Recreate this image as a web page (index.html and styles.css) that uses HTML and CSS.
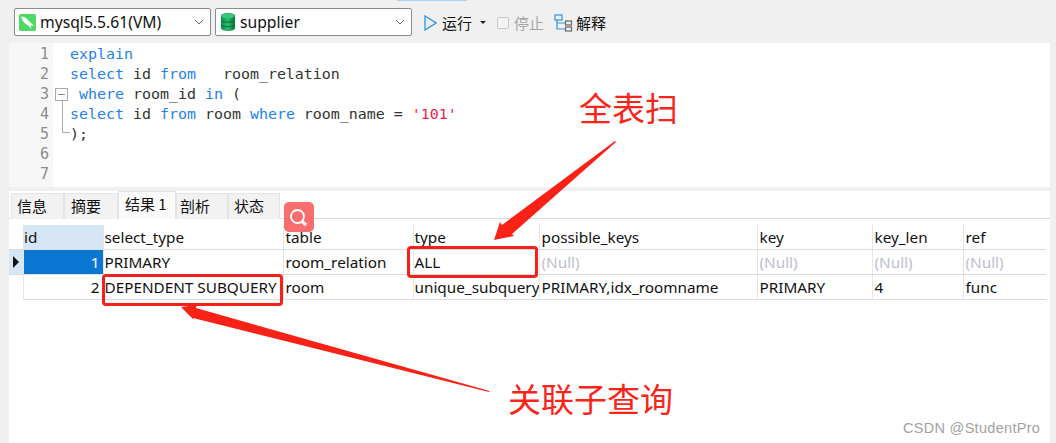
FILE: index.html
```html
<!DOCTYPE html>
<html lang="zh">
<head>
<meta charset="utf-8">
<title>Navicat explain</title>
<link rel="stylesheet" href="styles.css">
</head>
<body>
<div class="app">
  <div class="topline"><span class="topline-blue"></span></div>
  <div class="toolbar">
    <div class="combo">
      <svg class="combo-icon" viewBox="0 0 17 17" width="17" height="17"><rect x="0" y="0" width="17" height="17" rx="2" fill="#4cd964"/><path d="M2 2.500c3 0 5.500 1.500 7.500 4 1.500 2 3.500 3 5.500 5-1.500 0-2.500 .2-3.500 0l1 3c-2-1-3-2.500-4-3.500C5.500 9.500 3.500 7 2 2.500z" fill="#fff"/></svg>
      <span class="combo-text">mysql5.5.61(VM)</span>
      <svg class="chev" viewBox="0 0 10 6" width="10" height="6"><path d="M1 1l4 4 4-4" fill="none" stroke="#666" stroke-width="1"/></svg>
    </div>
    <div class="combo">
      <svg class="combo-icon db" viewBox="0 0 14 18" width="14" height="18"><defs><linearGradient id="dbg" x1="0" x2="1" y1="0" y2="0"><stop offset="0" stop-color="#0b8f4c"/><stop offset=".5" stop-color="#2dbb6c"/><stop offset="1" stop-color="#08703a"/></linearGradient></defs><path d="M0 3c0-4 14-4 14 0v12c0 4-14 4-14 0z" fill="url(#dbg)"/><ellipse cx="7" cy="3" rx="6.500" ry="2.300" fill="#35c878"/><path d="M0 7.500c2 2.200 12 2.200 14 0M0 12c2 2.200 12 2.200 14 0" fill="none" stroke="#06703a" stroke-width="1"/></svg>
      <span class="combo-text">supplier</span>
      <svg class="chev" viewBox="0 0 10 6" width="10" height="6"><path d="M1 1l4 4 4-4" fill="none" stroke="#666" stroke-width="1"/></svg>
    </div>
    <div class="tool tool-run">
      <svg viewBox="0 0 13 16" width="13" height="16"><path d="M1 1l11 7-11 7z" fill="none" stroke="#2a96ea" stroke-width="1.300"/></svg>
      <span>运行</span>
      <i class="caret"></i>
    </div>
    <div class="tool tool-stop">
      <span class="check"></span>
      <span>停止</span>
    </div>
    <div class="tool tool-explain">
      <svg viewBox="0 0 19 18" width="19" height="18"><rect x="1" y="1" width="7" height="5" fill="none" stroke="#2a96ea" stroke-width="1.200"/><rect x="11.500" y="7" width="6" height="4" fill="none" stroke="#666" stroke-width="1.200"/><rect x="11.500" y="13" width="6" height="4" fill="none" stroke="#666" stroke-width="1.200"/><path d="M3 6v9h8M3 9h8" fill="none" stroke="#2a96ea" stroke-width="1.200"/></svg>
      <span>解释</span>
    </div>
  </div>

  <div class="editor">
    <div class="gutter">
      <div>1</div><div>2</div><div>3</div><div>4</div><div>5</div><div>6</div><div>7</div>
    </div>
    <svg class="fold" viewBox="0 0 17 100" width="17" height="100"><rect x="2.500" y="44.500" width="12" height="12" fill="#fff" stroke="#aaa"/><path d="M5 50.500h7" stroke="#888"/><path d="M9.500 56.500v32h7.500" fill="none" stroke="#aaa"/></svg>
    <div class="code">
      <div class="line"><span class="kw">explain</span></div>
      <div class="line"><span class="kw">select</span> id <span class="kw">from</span>   room_relation</div>
      <div class="line"> <span class="kw">where</span> room_id <span class="kw">in</span> (</div>
      <div class="line"><span class="kw">select</span> id <span class="kw">from</span> room <span class="kw">where</span> room_name = <span class="str">'101'</span></div>
      <div class="line">);</div>
    </div>
  </div>

  <div class="results">
    <div class="tabs">
      <div class="tab tab-a">信息</div>
      <div class="tab tab-b">摘要</div>
      <div class="tab tab-active">结果 1</div>
      <div class="tab tab-c">剖析</div>
      <div class="tab tab-d">状态</div>
    </div>
    <table class="grid">
      <colgroup>
        <col class="c0"><col class="c1"><col class="c2"><col class="c3"><col class="c4"><col class="c5"><col class="c6"><col class="c7"><col class="c8">
      </colgroup>
      <thead>
        <tr><th class="mark-head"></th><th class="id-head">id</th><th class="tight">select_type</th><th>table</th><th class="tight">type</th><th>possible_keys</th><th>key</th><th>key_len</th><th>ref</th></tr>
      </thead>
      <tbody>
        <tr><td class="mark"><i class="tri"></i></td><td class="num sel">1</td><td class="tight">PRIMARY</td><td>room_relation</td><td class="tight">ALL</td><td class="null">(Null)</td><td class="null">(Null)</td><td class="null">(Null)</td><td class="null">(Null)</td></tr>
        <tr><td class="mark-empty"></td><td class="num">2</td><td class="tight">DEPENDENT SUBQUERY</td><td>room</td><td class="tight">unique_subquery</td><td>PRIMARY,idx_roomname</td><td>PRIMARY</td><td>4</td><td>func</td></tr>
      </tbody>
    </table>
  </div>

  <div class="search-btn">
    <svg viewBox="0 0 22 22" width="22" height="22"><circle cx="9.500" cy="10.500" r="6.500" fill="none" stroke="#fff" stroke-width="1.800"/><path d="M14 15.500l4 3.500" stroke="#fff" stroke-width="3"/></svg>
  </div>

  <svg class="arrows" viewBox="0 0 1056 443" width="1056" height="443">
    <polygon points="615,141 616,142 512,234 514,236 494,240 500,222 502,225" fill="#fa2216"/>
    <polygon points="489.500,391 489,392 193,318 194,320 181,307 197,305 196,308" fill="#fa2216"/>
  </svg>
  <div class="redbox box-all"></div>
  <div class="redbox box-dep"></div>
  <div class="note note-full">全表扫</div>
  <div class="note note-sub">关联子查询</div>
  <div class="watermark">CSDN @StudentPro</div>
</div>
</body>
</html>
```
FILE: styles.css
```css
* { box-sizing: border-box; }
html, body { margin: 0; padding: 0; }
body { background: #f0f0f0; overflow: hidden; font-family: "Noto Sans", "Noto Sans CJK SC", sans-serif; color: #111; }
.app { position: relative; width: 1056px; height: 443px; display: flex; flex-direction: column; overflow: hidden; }

.topline { height: 1px; padding-left: 397px; }
.topline-blue { display: block; width: 70px; height: 1px; background: #a9d4f5; }

.toolbar { height: 42px; padding: 7px 0 0 14px; display: flex; align-items: flex-start; }
.combo { width: 197px; height: 28px; margin-right: 4px; background: #fff; border: 1px solid #8c8c8c; border-radius: 2px; display: flex; align-items: center; padding-left: 4px; }
.combo-icon { flex: none; margin-right: 4px; }
.combo-icon.db { margin: 0 5px 0 1px; }
.combo-text { flex: 1; font-size: 15.7px; }
.chev { flex: none; margin-right: 6px; }

.tool { display: flex; align-items: center; height: 29px; font-size: 15px; font-family: "Noto Sans CJK SC", sans-serif; }
.tool-run { margin-left: 8px; }
.tool-run span { margin-left: 5px; }
.caret { width: 0; height: 0; border-left: 3px solid transparent; border-right: 3px solid transparent; border-top: 3px solid #222; margin-left: 8px; }
.tool-stop { margin-left: 11px; color: #a6a6a6; }
.check { width: 12px; height: 12px; border: 1px solid #c8c8c8; border-radius: 2px; margin-right: 5px; background: #f4f4f4; }
.tool-explain { margin-left: 10px; }
.tool-explain span { margin-left: 3px; }

.editor { height: 144px; margin: 0 6px 0 9px; background: #fff; display: flex; align-items: flex-start; }
.gutter { width: 44px; height: 144px; padding: 1px 4px 0 0; background: #f7f7f7; color: #8c8c8c; text-align: right; font: 15px/20px "DejaVu Sans Mono", monospace; }
.fold { flex: none; margin-top: 1px; }
.code { margin: 1px 0 0; font: 14.95px/20px "DejaVu Sans Mono", monospace; color: #333; }
.line { height: 20px; white-space: pre; }
.kw { color: #1e82f0; }
.str { color: #f0194b; }

.results { flex: 1; margin: 4px 6px 0 9px; background: #fff; }
.tabs { height: 28px; display: flex; align-items: flex-end; border-bottom: 1px solid #dcdcdc; padding-left: 2px; font-size: 15px; font-family: "Noto Sans CJK SC", sans-serif; }
.tab { height: 26px; background: #f2f2f2; border: 1px solid #e4e4e4; border-bottom: 0; display: flex; align-items: center; margin-bottom: -1px; padding: 0 0 2px 5px; }
.tab-a { width: 53px; }
.tab-b { width: 54px; padding-left: 6px; }
.tab-active { width: 58px; height: 28px; background: #fafafa; padding: 0 0 4px 6px; }
.tab-c { width: 52px; padding-left: 3px; }
.tab-d { width: 52px; }

.grid { margin-top: 6px; width: 1037px; table-layout: fixed; border-collapse: collapse; font-size: 15.3px; }
.c0 { width: 14px; }
.c1 { width: 80px; }
.c2 { width: 180px; }
.c3 { width: 130px; }
.c4 { width: 126px; }
.c5 { width: 218px; }
.c6 { width: 115px; }
.c7 { width: 91px; }
.c8 { width: 83px; }
.grid th, .grid td { height: 25px; padding: 0 0 0 2px; text-align: left; font-weight: 400; white-space: nowrap; overflow: hidden; border-right: 1px solid #e6e6e6; border-bottom: 1px solid #dcdcdc; }
.grid th { height: 24px; }
.grid th:last-child, .grid td:last-child { border-right: 0; }
.grid th.mark-head { border-bottom: 1px solid #dcdcdc; border-right: 0; }
.grid th.id-head { background: #d6e6f5; padding-left: 1px; }
.grid .tight { padding-left: 1px; }
.grid td.mark { background: #d6e6f5; padding: 0 0 0 4px; }
.grid td.mark-empty { border-bottom: 0; }
.tri { display: block; width: 0; height: 0; border-top: 6px solid transparent; border-bottom: 6px solid transparent; border-left: 6px solid #111; }
.grid td.num { text-align: right; padding: 0 3px 0 0; }
.grid td.sel { background: #0a78d2; color: #fff; }
.grid td.null { color: #bcc0d2; }

.search-btn { position: absolute; left: 284px; top: 202px; width: 30px; height: 30px; border-radius: 5px; background: rgba(248, 98, 98, .92); display: flex; align-items: center; justify-content: center; }
.arrows { position: absolute; left: 0; top: 0; pointer-events: none; }
.redbox { position: absolute; border: 3px solid #f5201a; border-radius: 4px; }
.box-all { left: 407px; top: 246px; width: 131px; height: 32px; }
.box-dep { left: 102px; top: 274px; width: 181px; height: 32px; }
.note { position: absolute; font: 33px/40px "Noto Sans CJK SC", sans-serif; color: #fb2418; white-space: nowrap; }
.note-full { left: 579px; top: 87px; }
.note-sub { left: 508px; top: 378px; }
.watermark { position: absolute; left: 903px; top: 419px; font: 14.5px/18px "Liberation Sans", sans-serif; color: #a3a3a3; letter-spacing: .3px; white-space: nowrap; }
```
